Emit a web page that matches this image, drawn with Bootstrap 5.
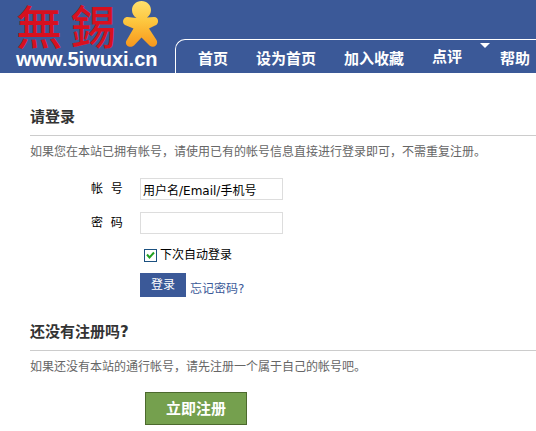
<!DOCTYPE html>
<html lang="zh-CN">
<head>
<meta charset="utf-8">
<meta name="viewport" content="width=device-width, initial-scale=1">
<title>请登录</title>
<link href="https://cdn.jsdelivr.net/npm/bootstrap@5.3.0/dist/css/bootstrap.min.css" rel="stylesheet">
<style>
body{font:12px/20px "DejaVu Sans","Noto Sans CJK SC",sans-serif;color:#000;background:#fff}
.site-header{background:#3b5998;height:73px}
.brand{width:143px;margin-left:16px;color:#fff}
.brand-name{font:500 46px/48px "Noto Sans CJK TC",sans-serif;color:#d7101f;height:48px;gap:8px}
.brand-url{font:700 20px/22px "Liberation Sans",Arial,sans-serif}
.site-nav{border:solid #fff;border-width:1px 0 0 1px;border-top-left-radius:10px;height:34px;margin-left:16px;padding-left:22px;gap:28px}
.site-nav a{font-size:15px;line-height:20px;font-weight:700;color:#fff;padding-top:9px}
.site-nav .with-menu{padding-top:7px}
.menu-arrow{margin:3px -18px 0 -10px}
main{padding:32px 0 6px 30px}
.section-title{font-size:15px;line-height:24px;font-weight:700;color:#333;padding-bottom:6px;border-bottom:1px solid #ccc}
.hint{color:#666;margin-top:6px}
.field-row{margin-bottom:12px}
.field-row label{width:110px;padding-left:61px}
.field-row input{width:143px;height:22px;border:1px solid #ddd;padding:0 2px;font-size:12px;line-height:20px}
.actions{padding-left:110px;margin-top:-1px}
.tick{appearance:none;width:13px;height:13px;border:1px solid #1c5180;background:#fff;margin:0 3px 0 4px}
.tick:checked{background:#fff url("data:image/svg+xml,%3Csvg xmlns='http://www.w3.org/2000/svg' viewBox='0 0 11 11'%3E%3Cpath d='M2 4.5 4.5 7.5 9 2.5' fill='none' stroke='%2321a121' stroke-width='2'/%3E%3C/svg%3E")}
.btn-login{background:#3b5998;color:#fff;width:46px;height:24px;font-size:12px;line-height:20px}
.forgot{color:#3b5998;margin:6px 0 0 4px}
.join{padding-top:21px}
.btn-join{background:#75a04e;color:#fff;border:1px solid #4c692d;width:102px;height:33px;font-size:15px;line-height:20px;font-weight:700;margin:15px 0 0 115px}
.btn-login:hover,.btn-join:hover{color:#fff;background:#2d4373}
</style>
</head>
<body>
<header class="site-header d-flex align-items-end">
  <a href="#" class="brand text-decoration-none flex-shrink-0 align-self-start">
    <span class="d-flex align-items-start justify-content-between">
      <span class="brand-name d-flex"><span>無</span><span>錫</span></span>
      <svg class="flex-shrink-0" width="36" height="48" viewBox="0 0 36 48" aria-hidden="true">
        <defs><linearGradient id="gold" x1="0" y1="0" x2="0" y2="1"><stop offset="0" stop-color="#ffe06d"/><stop offset=".45" stop-color="#fdc63e"/><stop offset="1" stop-color="#f7971c"/></linearGradient></defs>
        <path fill="url(#gold)" d="M18.5 1C24 1 28 5 28 10C28 13 26.500 15.500 24 17.500L31 17C36 17 36.500 24 32 25.500L26 28.500L33.500 40C36 45 30.500 49 26.500 45.500L18.500 37.500L11 45.500C7 49 1 45 3.500 40.500L10.500 28.500L2 25C-1.500 23 0 17 4.500 17L13.500 18C10.500 16 9 13.500 9 10C9 5 13 1 18.500 1Z"/>
      </svg>
    </span>
    <span class="brand-url d-block">www.5iwuxi.cn</span>
  </a>
  <nav class="site-nav d-flex flex-grow-1 text-nowrap" aria-label="主导航">
    <a href="#" class="text-decoration-none">首页</a>
    <a href="#" class="text-decoration-none">设为首页</a>
    <a href="#" class="text-decoration-none">加入收藏</a>
    <a href="#" class="text-decoration-none with-menu">点评</a>
    <svg class="menu-arrow flex-shrink-0" width="10" height="5" viewBox="0 0 10 5" aria-hidden="true"><path d="M0 0H10L5 5Z" fill="#fff"/></svg>
    <a href="#" class="text-decoration-none">帮助</a>
  </nav>
</header>
<main>
  <section>
    <h1 class="section-title mb-0">请登录</h1>
    <p class="hint mb-0">如果您在本站已拥有帐号，请使用已有的帐号信息直接进行登录即可，不需重复注册。</p>
    <form class="pt-3">
      <div class="field-row d-flex align-items-center">
        <label for="account">帐&nbsp;&nbsp;号</label>
        <input id="account" type="text" value="用户名/Email/手机号">
      </div>
      <div class="field-row d-flex align-items-center">
        <label for="password">密&nbsp;&nbsp;码</label>
        <input id="password" type="password">
      </div>
      <div class="actions">
        <div class="d-flex align-items-center">
          <input class="tick" id="remember" type="checkbox" checked>
          <label for="remember">下次自动登录</label>
        </div>
        <div class="d-flex align-items-start pt-2">
          <button type="button" class="btn btn-login rounded-0 border-0 p-0">登录</button>
          <a href="#" class="forgot text-decoration-none">忘记密码?</a>
        </div>
      </div>
    </form>
  </section>
  <section class="join">
    <h2 class="section-title mb-0">还没有注册吗?</h2>
    <p class="hint mb-0">如果还没有本站的通行帐号，请先注册一个属于自己的帐号吧。</p>
    <button type="button" class="btn btn-join rounded-0 p-0">立即注册</button>
  </section>
</main>
<script src="https://cdn.jsdelivr.net/npm/bootstrap@5.3.0/dist/js/bootstrap.bundle.min.js"></script>
</body>
</html>
